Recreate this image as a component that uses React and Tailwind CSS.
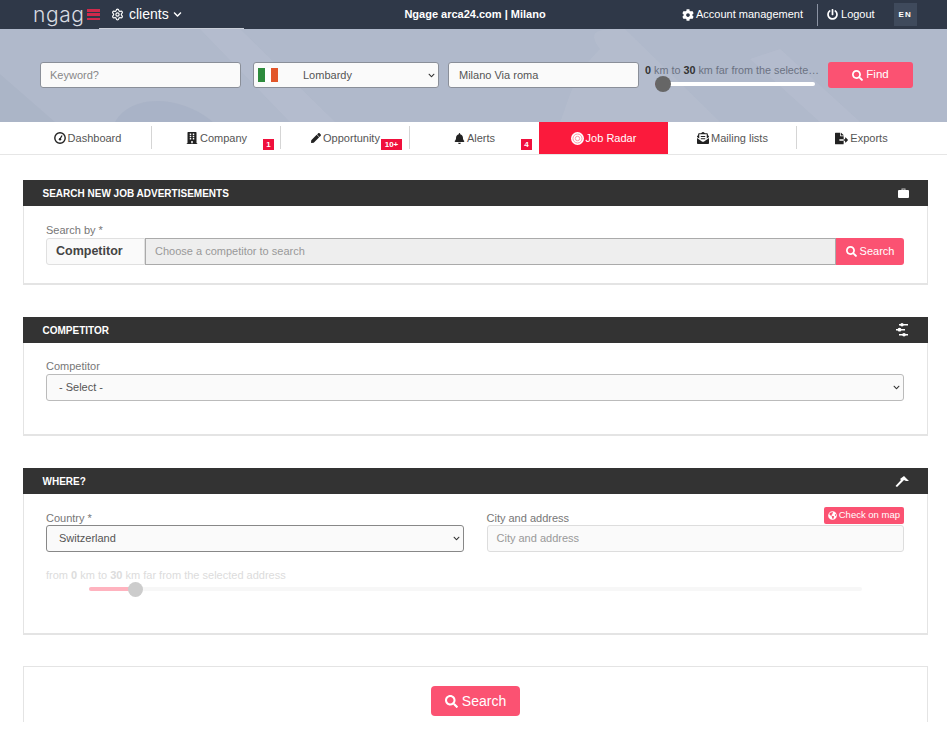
import { FaChevronDown, FaCog, FaPowerOff, FaBuilding, FaPen, FaBell, FaEnvelopeOpenText, FaFileExport, FaSearch, FaGlobeAmericas } from "react-icons/fa";
import { Settings } from "lucide-react";

const font = "font-['Liberation_Sans',Arial,sans-serif]";

const RadarIcon = () => (
  <svg width="13" height="13" viewBox="0 0 13 13" fill="none">
    <circle cx="6.5" cy="6.5" r="6.5" fill="white" />
    <circle cx="6.5" cy="6.5" r="4.5" stroke="#fb9aa8" strokeWidth="1" />
    <circle cx="6.5" cy="6.5" r="2.2" stroke="#fb9aa8" strokeWidth="1" />
  </svg>
);

const GaugeIcon = () => (
  <svg width="12" height="12" viewBox="0 0 12 12" fill="none" stroke="#222">
    <circle cx="6" cy="6" r="5.2" strokeWidth="1.4" />
    <path d="M6 7l2-3.5" strokeWidth="1.3" />
    <circle cx="6" cy="7.2" r="1.2" fill="#222" stroke="none" />
  </svg>
);

const CaseIcon = () => (
  <svg width="11" height="10" viewBox="0 0 11 10" fill="white">
    <path d="M3.5 2V.6h4V2h-1V1.5h-2V2z" fillOpacity="0.7" />
    <rect y="2" width="11" height="8" rx="1" />
  </svg>
);

const tabs = [
  { label: "Dashboard", icon: <GaugeIcon /> },
  { label: "Company", icon: <FaBuilding className="text-[12px] text-[#222]" />, badge: "1", badgeClass: "right-[7px] w-[11px]" },
  { label: "Opportunity", icon: <FaPen className="text-[10px] text-[#222]" />, badge: "10+", badgeClass: "right-[8px] w-[21px]" },
  { label: "Alerts", icon: <FaBell className="text-[11px] text-[#222]" />, badge: "4", badgeClass: "right-[7px] w-[11px]" },
  { label: "Job Radar", icon: <RadarIcon />, active: true },
  { label: "Mailing lists", icon: <FaEnvelopeOpenText className="text-[12px] text-[#222]" /> },
  { label: "Exports", icon: <FaFileExport className="text-[13px] text-[#222]" />, last: true },
];

const Panel = ({ title, icon, className, children }) => (
  <section className={`border border-b-2 border-[#e4e4e4] border-t-0 bg-white ${className}`}>
    <div className="-mx-px flex h-[26px] items-center justify-between bg-[#333333] pl-[19.5px] pr-[19px] text-[10px] font-bold uppercase text-white">
      <span>{title}</span>
      {icon}
    </div>
    {children}
  </section>
);

const ChannelIcon = () => (
  <svg width="14" height="14" viewBox="0 0 14 14" fill="white">
    <path d="M4 1h9v1.4H4zM1 6h9v1.4H1zM4 11h9v1.4H4z" />
    <circle cx="7" cy="1.7" r="1.7" />
    <circle cx="4.5" cy="6.7" r="1.9" />
    <circle cx="9" cy="11.7" r="1.8" />
  </svg>
);

const PinIcon = () => (
  <svg width="14" height="12" viewBox="0 0 14 12" fill="white">
    <path d="M9 1l5 5h-3L9 5 2 12 .5 11 6 5 5 4z" />
  </svg>
);

const App = () => {
  return (
    <div className={`${font} h-[742px] w-[947px] overflow-hidden bg-white text-[#555]`}>
      <header className="flex h-[29px] items-center bg-[#2f3848] text-white">
        <div className="flex h-full w-[99px] items-center pl-[33px]">
          <span className="font-['Inter',sans-serif] text-[21px] font-light leading-none tracking-[0.6px] text-[#d8dbe1]">ngag</span>
          <span className="ml-[2px] flex h-[11px] w-[13px] shrink-0 flex-col justify-between">
            <i className="block h-[2.5px] bg-[#d02a4c]" />
            <i className="block h-[2.5px] bg-[#d02a4c]" />
            <i className="block h-[2.5px] bg-[#d02a4c]" />
          </span>
        </div>
        <div className="relative ml-[12px] flex h-full w-[121px] items-center gap-[6px] text-[14px]">
          <Settings size={13} strokeWidth={2.2} />
          <span className="-ml-px">clients</span>
          <FaChevronDown className="-ml-[2px] text-[9px]" />
          <span className="absolute bottom-0 -left-[12px] h-px w-[145px] bg-[#c9ced8]" />
        </div>
        <div className="ml-[123px] w-[240px] text-center text-[11px] font-bold">Ngage arca24.com | Milano</div>
        <div className="ml-[87px] flex items-center gap-[3px] text-[11px]">
          <FaCog className="text-[12px]" />
          <span className="-ml-px">Account management</span>
        </div>
        <div className="ml-[14px] h-[22px] w-px bg-[#8b93a3]" />
        <div className="ml-[9px] flex items-center gap-[3px] text-[11px]">
          <FaPowerOff className="text-[11px]" />
          <span>Logout</span>
        </div>
        <div className="ml-[19px] flex h-[23px] w-[23px] items-center justify-center bg-[#3f4a5c] text-[8px] font-bold tracking-[1px]">EN</div>
      </header>

      <div className="relative h-[93px] overflow-hidden bg-[#b0b9cb]">
        <svg className="absolute inset-0" width="947" height="93" viewBox="0 0 947 93" fill="none">
          <path d="M240 0L335 93H290L200 0z" fill="#bac2d2" fillOpacity="0.45" />
          <path d="M0 45L55 93H0z" fill="#a8b2c5" fillOpacity="0.6" />
          <path d="M115 93C130 65 180 65 213 93z" fill="#a7b1c4" fillOpacity="0.7" />
          <path d="M600 20C585 0 600 0 625 0L720 93H560C570 70 570 50 600 20z" fill="#b8c0d0" fillOpacity="0.5" />
          <path d="M780 20L860 93H820L750 30z" fill="#bac2d2" fillOpacity="0.45" />
        </svg>
        <div className="relative flex items-start pl-[40px] pt-[33px] text-[11px]">
          <input readOnly placeholder="Keyword?" className="h-[26px] w-[201px] rounded-[3px] border border-[#8a8f99] bg-[#fafafa] px-[9px] outline-none placeholder:text-[#888]" />
          <div className="relative ml-[12px] flex h-[26px] w-[186px] items-center rounded-[3px] border border-[#8a8f99] bg-[#fafafa] text-[#555]">
            <span className="ml-[4px] flex h-[14px] w-[20px]">
              <i className="block w-1/3 bg-[#2e8b3d]" />
              <i className="block w-1/3 bg-white" />
              <i className="block w-1/3 bg-[#e2562a]" />
            </span>
            <span className="ml-[25px]">Lombardy</span>
            <FaChevronDown className="absolute right-[3px] text-[7px] text-[#333]" />
          </div>
          <input readOnly value="Milano Via roma" className="ml-[9px] h-[26px] w-[191px] rounded-[3px] border border-[#8a8f99] bg-[#fafafa] px-[10px] text-[#555] outline-none" />
          <div className="ml-[6px] mt-px w-[176px]">
            <div className="truncate text-[10.8px] leading-[14px] text-[#6b7282]"><b className="text-[#333]">0</b> km to <b className="text-[#333]">30</b> km far from the selected address</div>
            <div className="relative ml-[10px] mt-[5px] h-[4px] w-[160px] rounded-full bg-white">
              <span className="absolute left-0 top-0 h-[4px] w-[8px] rounded-full bg-[#e0294a]" />
              <span className="absolute left-0 -top-[6px] h-[16px] w-[16px] rounded-full bg-[#666]" />
            </div>
          </div>
          <button className="ml-[7px] flex h-[26px] w-[85px] items-center justify-center gap-[3px] rounded-[3px] bg-[#fb5272] text-[11.5px] text-white">
            <FaSearch className="text-[11px]" />
            <span>Find</span>
          </button>
        </div>
      </div>

      <nav className="h-[33px] border-b border-[#e6e6e6] bg-white pl-[23px] pr-[21px]">
        <div className="grid h-[32px] grid-cols-7">
          {tabs.map((tab, i) => (
            <div key={tab.label} className={`relative flex items-center justify-center gap-[2px] text-[11px] ${tab.active ? "bg-[#fb1a3c] text-white" : "text-[#555]"}`}>
              {tab.icon}
              <span>{tab.label}</span>
              {tab.badge && (
                <span className={`absolute bottom-[4px] flex h-[11px] items-center justify-center bg-[#f0103c] text-[8px] font-bold text-white ${tab.badgeClass}`}>{tab.badge}</span>
              )}
              {!tab.active && !tab.last && i !== 3 && i !== 4 && (
                <span className="absolute right-0 top-[4px] h-[23px] w-px bg-[#d5d5d5]" />
              )}
            </div>
          ))}
        </div>
      </nav>

      <main className="flex flex-col pl-[23px] pr-[19px] pt-[25px] text-[11px]">
        <Panel title="Search new job advertisements" icon={<CaseIcon />} className="h-[105px]">
          <div className="pl-[22px] pr-[23px] pt-[18px]">
            <label className="block h-[14px] text-[11px] leading-[13px] text-[#777]">Search by *</label>
            <div className="flex h-[27px]">
              <div className="flex w-[99px] items-center rounded-l-[3px] border border-[#e0e0e0] bg-[#fafafa] pl-[9px] text-[12.5px] font-bold text-[#444]">Competitor</div>
              <div className="flex flex-1 items-center border border-[#aaa] bg-[#eeeeee] pl-[9px] text-[#999]">Choose a competitor to search</div>
              <button className="flex w-[68px] items-center justify-center gap-[3px] rounded-r-[3px] bg-[#fb5272] text-white">
                <FaSearch className="text-[11px]" />
                <span>Search</span>
              </button>
            </div>
          </div>
        </Panel>

        <Panel title="Competitor" icon={<ChannelIcon />} className="mt-[32px] h-[119px]">
          <div className="pl-[22px] pr-[23px] pt-[17px]">
            <label className="block h-[14px] text-[11px] leading-[13px] text-[#777]">Competitor</label>
            <div className="relative flex h-[27px] items-center rounded-[3px] border border-[#bbb] bg-[#fafafa] pl-[12px] text-[#555]">
              - Select -
              <FaChevronDown className="absolute right-[3px] text-[7px] text-[#333]" />
            </div>
          </div>
        </Panel>

        <Panel title="Where?" icon={<PinIcon />} className="mt-[32px] h-[167px]">
          <div className="pl-[22px] pr-[23px] pt-[18px]">
            <div className="grid grid-cols-2 gap-[23px]">
              <div>
                <label className="block text-[11px] leading-[13px] text-[#777]">Country *</label>
                <div className="relative flex h-[27px] items-center rounded-[3px] border border-[#888] bg-[#fafafa] pl-[12px] text-[#555]">
                  Switzerland
                  <FaChevronDown className="absolute right-[3px] text-[7px] text-[#333]" />
                </div>
              </div>
              <div className="relative">
                <label className="block text-[11px] leading-[13px] text-[#777]">City and address</label>
                <span className="absolute -top-[5px] right-0 flex h-[17px] items-center gap-[2px] rounded-[2px] bg-[#fb5272] px-[4px] text-[9.5px] text-white">
                  <FaGlobeAmericas className="text-[9px]" />
                  Check on map
                </span>
                <div className="flex h-[27px] items-center rounded-[3px] border border-[#ddd] bg-[#fafafa] pl-[9px] text-[#999]">City and address</div>
              </div>
            </div>
            <p className="mt-[17px] text-[11px] leading-[13px] text-[#dcdcdc]">from <b>0</b> km to <b>30</b> km far from the selected address</p>
            <div className="relative ml-[43px] mt-[5px] h-[4px] w-[773px] rounded-full bg-[#f7f7f7]">
              <span className="absolute left-0 top-0 h-[4px] w-[45px] rounded-full bg-[#ffb3bf]" />
              <span className="absolute left-[39px] -top-[5px] h-[15px] w-[15px] rounded-full bg-[#cccccc]" />
            </div>
          </div>
        </Panel>

        <section className="mt-[31px] flex h-[56px] justify-center border border-b-0 border-[#e4e4e4] pt-[19px]">
          <button className="flex h-[30px] w-[89px] items-center justify-center gap-[4px] rounded-[4px] bg-[#fb5272] text-[14px] text-white">
            <FaSearch className="text-[13px]" />
            <span>Search</span>
          </button>
        </section>
      </main>
    </div>
  );
};

export default App;
